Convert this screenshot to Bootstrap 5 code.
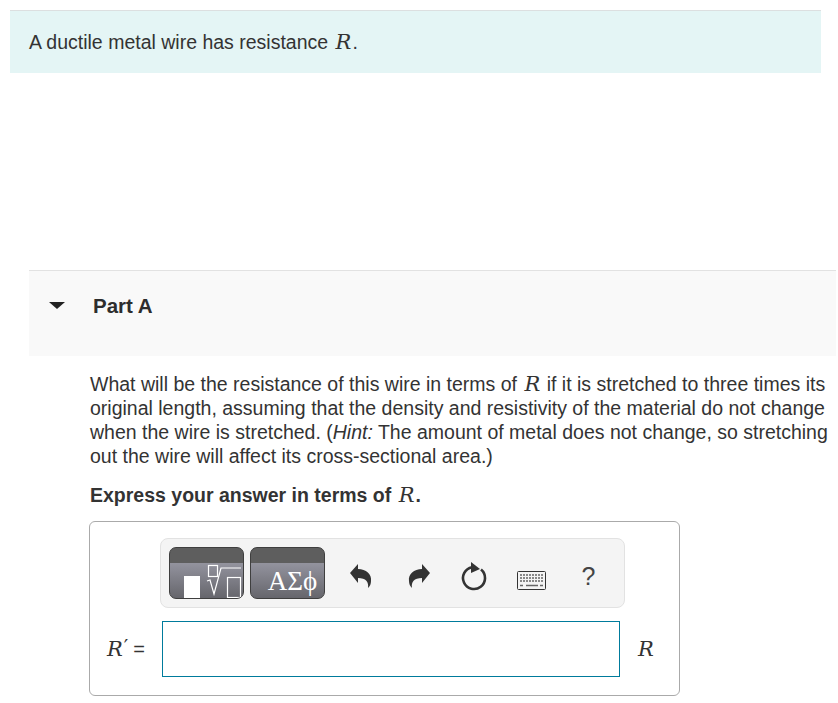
<!DOCTYPE html>
<html lang="en">
<head>
  <meta charset="UTF-8" />
  <meta name="viewport" content="width=device-width, initial-scale=1" />
  <title>Part A</title>
  <link href="https://cdn.jsdelivr.net/npm/bootstrap@5.3.3/dist/css/bootstrap.min.css" rel="stylesheet" />
  <style>
    body {
      font-family: "Liberation Sans", Arial, sans-serif;
      font-size: 19.5px;
      line-height: 24px;
      color: #333;
      background: #fff;
      overflow: hidden;
    }

    .page-wrap {
      padding: 10px 0 0 10px;
    }

    .intro-box {
      width: 811px;
      height: 63px;
      padding: 19px 19px 0;
      background: #e4f5f5;
      border-top: 1px solid #dcdfe0;
    }

    .math-var {
      font-family: "DejaVu Serif", serif;
      font-style: italic;
      font-size: 21px;
      line-height: 20px;
      padding: 0 1px 0 2px;
    }

    .part-head {
      width: 807px;
      height: 86px;
      margin: 197px 0 0 19px;
      padding: 23px 0 0 20px;
      background: #f9f9f9;
      border-top: 1px solid #e2e2e2;
      font-size: 20.5px;
      font-weight: 700;
      color: #2d2d2d;
    }

    .part-arrow {
      width: 0;
      height: 0;
      margin-right: 28px;
      border-left: 8px solid transparent;
      border-right: 8px solid transparent;
      border-top: 7px solid #222;
    }

    .part-body {
      margin: 16px 0 0 80px;
      width: 746px;
    }

    .part-body p {
      margin: 0;
    }

    .answer-note {
      margin-top: 15px !important;
      font-weight: 700;
    }

    .answer-note .math-var {
      font-weight: 400;
    }

    .answer-box {
      width: 591px;
      height: 175px;
      margin-top: 14px;
      margin-left: -1px;
      padding: 16px 0 0 70px;
      border: 1px solid #aaa;
      border-radius: 6px;
    }

    .tool-bar {
      width: 465px;
      height: 70px;
      padding: 8px;
      gap: 6px;
      background: #f4f4f4;
      border: 1px solid #e2e2e2;
      border-radius: 8px;
    }

    .tool-btn {
      width: 75px;
      height: 52px;
      padding: 0;
      overflow: hidden;
      border: 1px solid #3f3f3f;
      border-radius: 7px;
      color: #fff;
      background: linear-gradient(#5e5e5e 0 15px, #93939e 15px, #66666c 100%);
    }

    .tool-btn svg {
      display: block;
    }

    .greek-label {
      display: block;
      padding: 16px 0 0 10px;
      font-family: "Liberation Serif", serif;
      font-size: 27px;
      line-height: 34px;
    }

    .tool-icons {
      margin-left: 2px;
    }

    .help-mark {
      width: 57px;
      padding-top: 6px;
      color: #444;
      font-size: 25px;
      text-align: center;
    }

    .answer-row {
      margin: 13px 0 0 -53px;
    }

    .answer-label {
      width: 55px;
    }

    .answer-label .math-var,
    .answer-unit .math-var {
      padding: 0;
    }

    .prime-mark {
      margin: 0 0 6px 1px;
      font-family: "DejaVu Sans", sans-serif;
      font-size: 20px;
      line-height: 17px;
    }

    .answer-eq {
      margin-left: 5px;
      font-size: 20px;
    }

    .answer-field {
      width: 458px;
      height: 56px;
      border: 1px solid #007b9c;
      background: #fff;
    }

    .answer-unit {
      margin-left: 18px;
    }
  </style>
</head>
<body>

<div class="page-wrap">
  <div class="intro-box">A ductile metal wire has resistance <span class="math-var">R</span>.</div>

  <!-- Part header -->
  <div class="part-head d-flex align-items-start">
    <span class="part-arrow mt-2"></span>
    <span>Part A</span>
  </div>

  <div class="part-body">
    <p>What will be the resistance of this wire in terms of <span class="math-var">R</span> if it is stretched to three times its original length, assuming that the density and resistivity of the material do not change when the wire is stretched. (<em>Hint:</em> The amount of metal does not change, so stretching out the wire will affect its cross-sectional area.)</p>
    <p class="answer-note">Express your answer in terms of <span class="math-var">R</span>.</p>

    <div class="answer-box">
      <!-- Toolbar -->
      <div class="tool-bar d-flex align-items-start">
        <div class="tool-btn flex-shrink-0">
          <svg width="73" height="50" viewBox="170 548 73 50">
            <rect x="184" y="576" width="16" height="22" fill="#fff"/>
            <g fill="none" stroke="#fff" stroke-width="1.200">
              <rect x="208.500" y="565.500" width="9" height="11"/>
              <path d="M207 581l3-1 4 14 7-26h20"/>
              <rect x="227.500" y="577.500" width="13" height="20"/>
            </g>
          </svg>
        </div>
        <div class="tool-btn flex-shrink-0 text-center"><span class="greek-label">ΑΣϕ</span></div>

        <div class="d-flex align-items-center flex-shrink-0 h-100 tool-icons">
          <svg width="57" height="50" viewBox="333 548 57 50">
            <path fill="#333" d="M350 573l8-9v5c8 0 14 5 13 12 0 3-1 5-3 7 1-6-2-10-10-10v5z"/>
          </svg>
          <svg width="60" height="50" viewBox="390 548 60 50">
            <path fill="#333" d="M430 573l-8-9v5c-8 0-14 5-13 12 0 3 1 5 3 7-1-6 2-10 10-10v5z"/>
          </svg>
          <svg width="55" height="50" viewBox="451 548 55 50">
            <path fill="none" stroke="#333" stroke-width="2.600" d="M473 567.200A11 11 0 1 0 482 569.500"/>
            <path fill="#333" d="M472 562l9 7-9 4z"/>
          </svg>
          <svg width="55" height="50" viewBox="505 548 55 50">
            <rect x="517.500" y="571.500" width="28" height="18" rx="1" fill="#f4f4f4" stroke="#333"/>
            <path stroke="#666" stroke-width="1.500" stroke-dasharray="2 1" fill="none" d="M520 575h23M520 578h23M520 581h23"/>
            <path stroke="#666" stroke-width="1.500" fill="none" d="M520 585.500h3M526 585.500h12M540 585.500h3"/>
          </svg>
          <span class="help-mark">?</span>
        </div>
      </div>

      <div class="answer-row d-flex align-items-center">
        <div class="answer-label d-flex align-items-center justify-content-start">
          <span class="math-var">R</span><span class="prime-mark">′</span><span class="answer-eq">=</span>
        </div>
        <div class="answer-field flex-shrink-0"></div>
        <div class="answer-unit"><span class="math-var">R</span></div>
      </div>
    </div>
  </div>
</div>

<script src="https://cdn.jsdelivr.net/npm/bootstrap@5.3.3/dist/js/bootstrap.bundle.min.js"></script>
</body>
</html>
